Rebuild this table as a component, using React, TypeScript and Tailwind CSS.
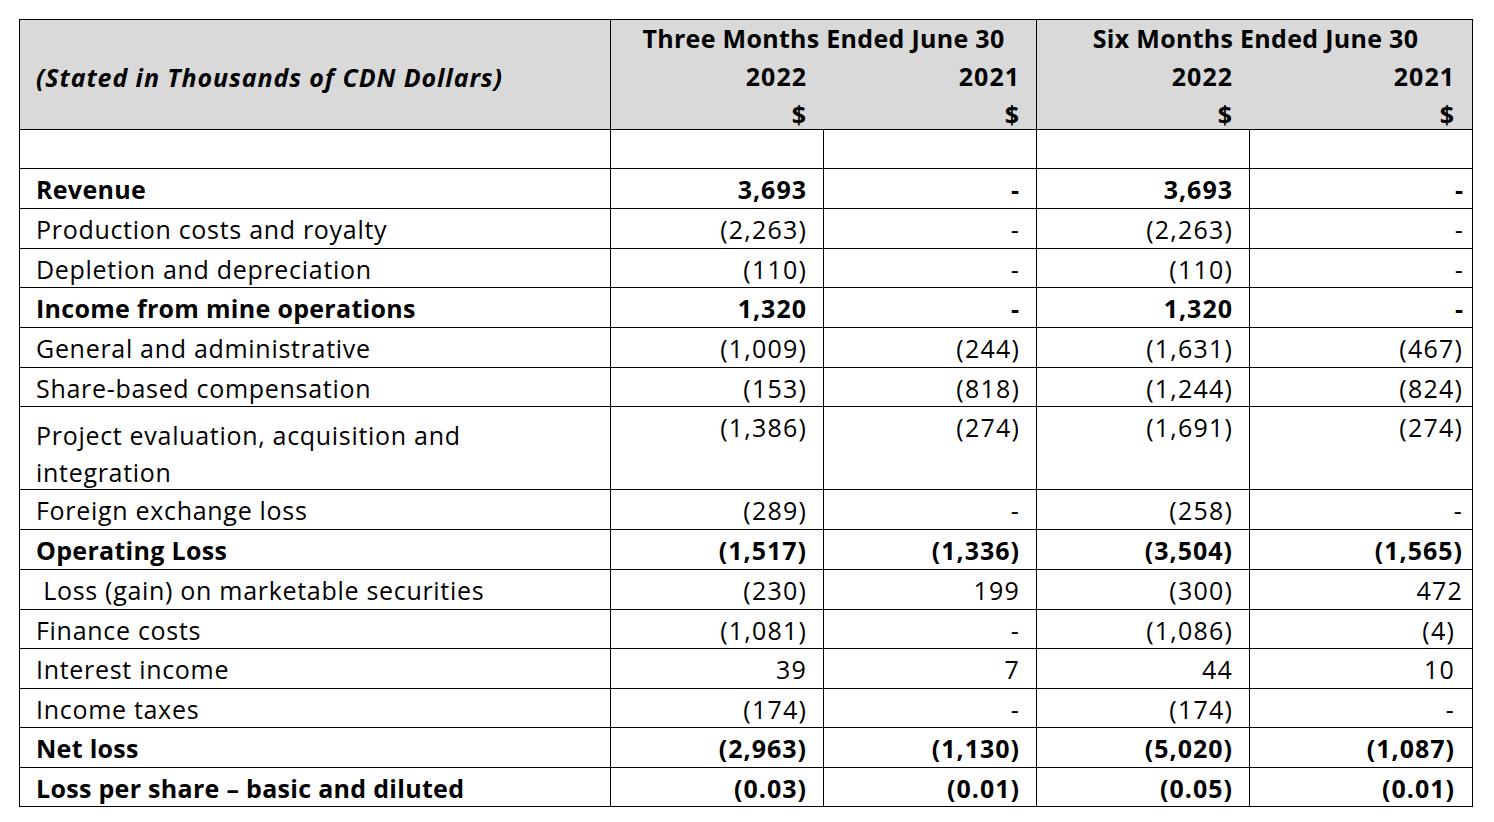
import React from "react";

type Row = {
  label: string;
  vals: string[];
  bold?: boolean;
  h: number;
  pr5: number;
  tall?: boolean;
};

const rows: Row[] = [
  { label: "Revenue", vals: ["3,693", "-", "3,693", "-"], bold: true, h: 40, pr5: 8 },
  { label: "Production costs and royalty", vals: ["(2,263)", "-", "(2,263)", "-"], h: 40, pr5: 8 },
  { label: "Depletion and depreciation", vals: ["(110)", "-", "(110)", "-"], h: 39, pr5: 8 },
  { label: "Income from mine operations", vals: ["1,320", "-", "1,320", "-"], bold: true, h: 40, pr5: 8 },
  { label: "General and administrative", vals: ["(1,009)", "(244)", "(1,631)", "(467)"], h: 40, pr5: 9 },
  { label: "Share-based compensation", vals: ["(153)", "(818)", "(1,244)", "(824)"], h: 39, pr5: 9 },
  { label: "Project evaluation, acquisition and integration", vals: ["(1,386)", "(274)", "(1,691)", "(274)"], h: 83, pr5: 9, tall: true },
  { label: "Foreign exchange loss", vals: ["(289)", "-", "(258)", "-"], h: 40, pr5: 9 },
  { label: "Operating Loss", vals: ["(1,517)", "(1,336)", "(3,504)", "(1,565)"], bold: true, h: 40, pr5: 9 },
  { label: "\u00a0Loss (gain) on marketable securities", vals: ["(230)", "199", "(300)", "472"], h: 40, pr5: 9 },
  { label: "Finance costs", vals: ["(1,081)", "-", "(1,086)", "(4)"], h: 39, pr5: 17 },
  { label: "Interest income", vals: ["39", "7", "44", "10"], h: 40, pr5: 17 },
  { label: "Income taxes", vals: ["(174)", "-", "(174)", "-"], h: 39, pr5: 17 },
  { label: "Net loss", vals: ["(2,963)", "(1,130)", "(5,020)", "(1,087)"], bold: true, h: 40, pr5: 17 },
  { label: "Loss per share \u2013 basic and diluted", vals: ["(0.03)", "(0.01)", "(0.05)", "(0.01)"], bold: true, h: 39, pr5: 17 },
];

const colW = ["w-[213px]", "w-[213px]", "w-[213px]", "w-[223px]"];

export default function App() {
  return (
    <div
      className="min-h-screen bg-white pt-[19px] pl-[19px] text-black"
      style={{ fontFamily: "'Open Sans', Lato, sans-serif" }}
    >
      <div className="w-[1454px] border-l border-t border-black text-[25px]">
        {/* Header */}
        <div className="flex h-[110px] border-b border-black bg-[#d9d9d9] font-bold leading-[38px] tracking-[0.3px]">
          <div className="w-[591px] shrink-0 border-r border-black pl-[16px] pt-[38px] italic tracking-[0.9px]">
            (Stated in Thousands of CDN Dollars)
          </div>
          <div className="w-[426px] shrink-0 border-r border-black">
            <div className="-mt-px text-center">Three Months Ended June 30</div>
            <div className="grid grid-cols-[212px_1fr] text-right tracking-[1px]">
              <div className="pr-[16px]">2022</div>
              <div className="pr-[16px]">2021</div>
              <div className="pr-[16px]">$</div>
              <div className="pr-[16px]">$</div>
            </div>
          </div>
          <div className="w-[436px] shrink-0 border-r border-black">
            <div className="-mt-px pl-[2px] text-center">Six Months Ended June 30</div>
            <div className="grid grid-cols-[212px_1fr] text-right tracking-[1px]">
              <div className="pr-[16px]">2022</div>
              <div className="pr-[17px]">2021</div>
              <div className="pr-[16px]">$</div>
              <div className="pr-[17px]">$</div>
            </div>
          </div>
        </div>

        {/* Empty row */}
        <div className="flex h-[39px] border-b border-black">
          <div className="w-[591px] shrink-0 border-r border-black" />
          {colW.map((w, i) => (
            <div key={i} className={`${w} shrink-0 border-r border-black`} />
          ))}
        </div>

        {rows.map((r, ri) => (
          <div
            key={ri}
            className={`flex border-b border-black leading-[37px] ${r.bold ? "font-bold" : "font-normal"}`}
            style={{ height: r.h }}
          >
            <div
              className={`w-[591px] shrink-0 border-r border-black pl-[16px] pr-[100px] ${r.tall ? "pt-[10px]" : "pt-[2px]"} ${r.bold ? "tracking-[0.3px]" : "tracking-[0.7px]"}`}
            >
              {r.label}
            </div>
            {r.vals.map((v, i) => (
              <div
                key={i}
                className={`${colW[i]} shrink-0 border-r border-black pt-[2px] text-right ${r.bold ? "tracking-[1px]" : "tracking-[1.2px]"}`}
                style={{ paddingRight: i === 3 ? r.pr5 : 16 }}
              >
                {v}
              </div>
            ))}
          </div>
        ))}
      </div>
    </div>
  );
}
